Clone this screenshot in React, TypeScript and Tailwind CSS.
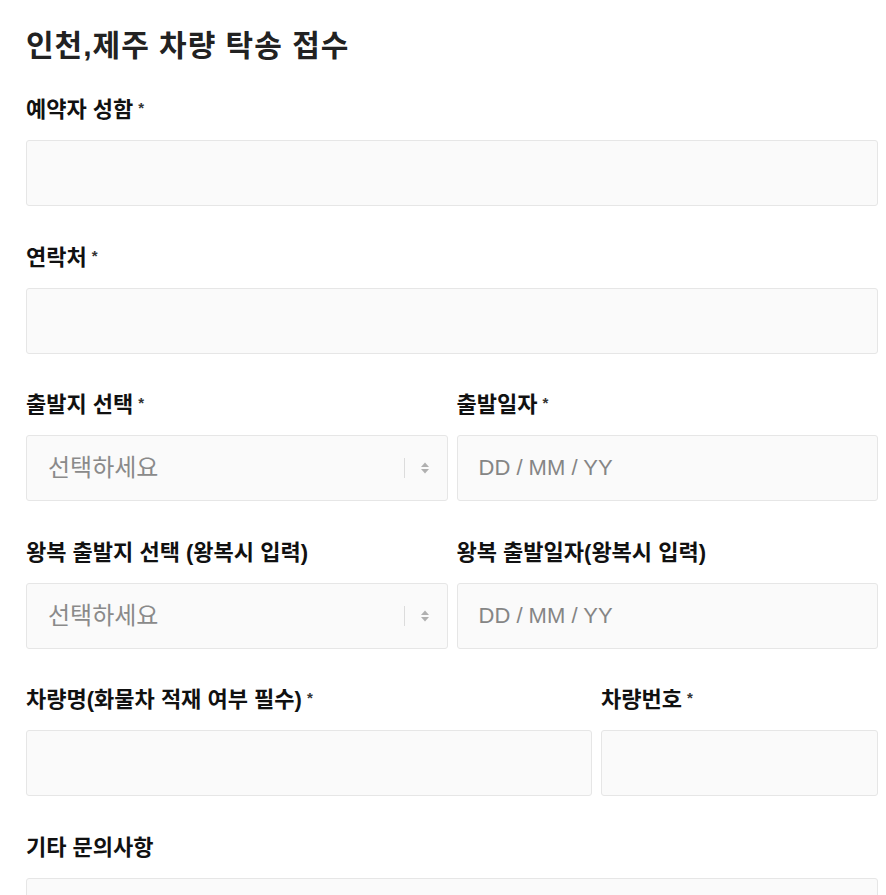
import React from 'react';

const font = { fontFamily: '"Liberation Sans", "Noto Sans CJK KR", sans-serif' };

function Label({ text, required }: { text: string; required?: boolean }) {
  return (
    <label className="mb-[18px] block h-6 text-[22px] font-bold leading-6 text-[#111]">
      {text}
      {required && <span className="ml-[5px] align-top text-[15px] font-bold leading-5 text-[#333]">*</span>}
    </label>
  );
}

function TextBox({ placeholder }: { placeholder?: string }) {
  return (
    <input
      type="text"
      placeholder={placeholder}
      className="block h-[66px] w-full rounded-[3px] border border-[#e6e6e6] bg-[#fafafa] px-[21px] text-[22px] text-[#333] outline-none placeholder:text-[#858585]"
    />
  );
}

function SelectBox() {
  return (
    <div className="flex h-[66px] w-full items-center rounded-[3px] border border-[#e6e6e6] bg-[#fafafa] pl-[21px] pr-[17px]">
      <span className="flex-1 text-[24px] leading-none text-[#8a8a8a]">선택하세요</span>
      <span className="h-[20px] w-px bg-[#dcdcdc]" />
      <svg width="10" height="16" viewBox="0 0 10 16" className="ml-[15px]">
        <path d="M5 2.5 L9 7 L1 7 Z" fill="#b0b0b0" />
        <path d="M5 13.5 L9 9 L1 9 Z" fill="#b0b0b0" />
      </svg>
    </div>
  );
}

function Field({ label, required, children }: { label: string; required?: boolean; children: React.ReactNode }) {
  return (
    <div className="mb-[39.6px]">
      <Label text={label} required={required} />
      {children}
    </div>
  );
}

export default function App() {
  return (
    <div className="min-h-screen bg-white pl-[26px] pr-[8px] pt-[28px]" style={font}>
      <h1 className="mb-[34px] text-[30px] font-bold leading-9 tracking-[1px] text-[#222]">인천,제주 차량 탁송 접수</h1>

      <Field label="예약자 성함" required>
        <TextBox />
      </Field>

      <Field label="연락처" required>
        <TextBox />
      </Field>

      <div className="grid grid-cols-2 gap-x-[9px]">
        <Field label="출발지 선택" required>
          <SelectBox />
        </Field>
        <Field label="출발일자" required>
          <TextBox placeholder="DD / MM / YY" />
        </Field>
      </div>

      <div className="grid grid-cols-2 gap-x-[9px]">
        <Field label="왕복 출발지 선택 (왕복시 입력)">
          <SelectBox />
        </Field>
        <Field label="왕복 출발일자(왕복시 입력)">
          <TextBox placeholder="DD / MM / YY" />
        </Field>
      </div>

      <div className="grid grid-cols-[566px_1fr] gap-x-[9px]">
        <Field label="차량명(화물차 적재 여부 필수)" required>
          <TextBox />
        </Field>
        <Field label="차량번호" required>
          <TextBox />
        </Field>
      </div>

      <Field label="기타 문의사항">
        <textarea className="block h-[160px] w-full resize-none rounded-[3px] border border-[#e6e6e6] bg-[#fafafa] outline-none" />
      </Field>
    </div>
  );
}
